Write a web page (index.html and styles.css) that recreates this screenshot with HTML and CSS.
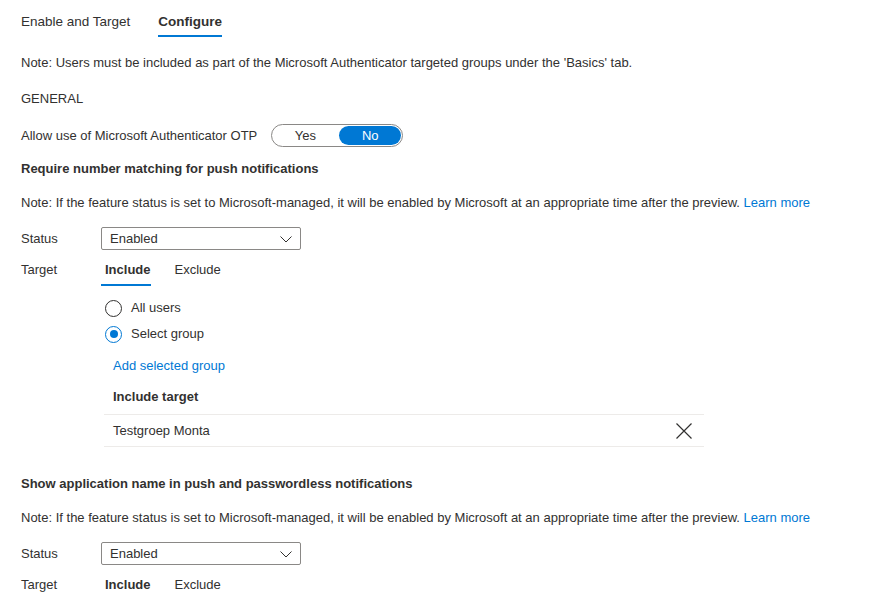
FILE: index.html
```html
<!DOCTYPE html>
<html>
<head>
<meta charset="utf-8">
<link rel="stylesheet" href="styles.css">
</head>
<body>
<div class="page">
  <div class="tabs">
    <div class="tab">Enable and Target</div>
    <div class="tab active">Configure</div>
  </div>
  <p class="note first">Note: Users must be included as part of the Microsoft Authenticator targeted groups under the 'Basics' tab.</p>
  <p class="section-label">GENERAL</p>
  <div class="toggle-row">
    <span>Allow use of Microsoft Authenticator OTP</span>
    <div class="toggle">
      <span class="seg">Yes</span>
      <span class="seg on">No</span>
    </div>
  </div>

  <h3 class="heading">Require number matching for push notifications</h3>
  <p class="note">Note: If the feature status is set to Microsoft-managed, it will be enabled by Microsoft at an appropriate time after the preview. <a class="link">Learn more</a></p>
  <div class="field">
    <span class="label">Status</span>
    <div class="dropdown"><span>Enabled</span>
      <svg width="16" height="16" viewBox="0 0 16 16"><path d="M2.5 5.5 L8 11 L13.5 5.5" fill="none" stroke="#323130" stroke-width="1"/></svg>
    </div>
  </div>
  <div class="field target">
    <span class="label">Target</span>
    <div class="target-body">
      <div class="pivots">
        <span class="pivot active">Include</span>
        <span class="pivot">Exclude</span>
      </div>
      <div class="radios">
        <div class="radio"><span class="circle"></span>All users</div>
        <div class="radio"><span class="circle checked"></span>Select group</div>
      </div>
      <a class="link add">Add selected group</a>
      <div class="table">
        <div class="thead">Include target</div>
        <div class="trow">
          <span>Testgroep Monta</span>
          <svg width="16" height="16" viewBox="0 0 16 16"><path d="M0.5 0.5 L15.5 15.5 M15.5 0.5 L0.5 15.5" stroke="#323130" stroke-width="1.2" fill="none"/></svg>
        </div>
      </div>
    </div>
  </div>

  <h3 class="heading second">Show application name in push and passwordless notifications</h3>
  <p class="note">Note: If the feature status is set to Microsoft-managed, it will be enabled by Microsoft at an appropriate time after the preview. <a class="link">Learn more</a></p>
  <div class="field">
    <span class="label">Status</span>
    <div class="dropdown"><span>Enabled</span>
      <svg width="16" height="16" viewBox="0 0 16 16"><path d="M2.5 5.5 L8 11 L13.5 5.5" fill="none" stroke="#323130" stroke-width="1"/></svg>
    </div>
  </div>
  <div class="field target">
    <span class="label">Target</span>
    <div class="target-body">
      <div class="pivots">
        <span class="pivot active">Include</span>
        <span class="pivot">Exclude</span>
      </div>
    </div>
  </div>
</div>
</body>
</html>
```

FILE: styles.css
```css
* { box-sizing: border-box; }
html, body { margin: 0; padding: 0; background: #fff; }
body {
  font-family: "Segoe UI", "Liberation Sans", Arial, sans-serif;
  font-size: 13px;
  line-height: 20px;
  color: #323130;
}
.page { padding-left: 21px; height: 594px; overflow: hidden; }
p, h3 { margin: 0; }

.tabs { display: flex; gap: 28px; }
.tab { padding-top: 12px; padding-bottom: 3px; border-bottom: 2px solid transparent; font-size: 13.5px; }
.tab.active { border-bottom-color: #0078d4; font-weight: 600; }

.note { margin-top: 14px; }
.note.first { margin-top: 16px; }
.section-label { margin-top: 16px; }

.toggle-row { display: flex; align-items: center; gap: 14px; margin-top: 15px; }
.toggle {
  display: flex; align-items: center; justify-content: space-between;
  width: 132px; height: 23px; border: 1px solid #8a8886; border-radius: 12px; padding: 1px;
}
.seg { width: 64px; height: 19px; line-height: 19px; text-align: center; border-radius: 10px; }
.seg.on { background: #0078d4; color: #fff; width: 62px; }

.heading { font-size: 13px; font-weight: 700; margin-top: 12px; line-height: 20px; }
.heading.second { margin-top: 27px; }

.link { color: #0078d4; text-decoration: none; }

.field { display: flex; align-items: flex-start; margin-top: 14px; }
.label { width: 80px; flex: none; line-height: 23px; }
.dropdown {
  width: 200px; height: 23px; border: 1px solid #8a8886; border-radius: 2px;
  display: flex; align-items: center; justify-content: space-between; padding: 0 6px 0 8px;
}
.field.target { margin-top: 10px; }
.field.target .label { line-height: 20px; }

.pivots { display: flex; }
.pivot { padding: 0 12px 4px 4px; border-bottom: 2px solid transparent; }
.pivot.active { font-weight: 600; border-bottom-color: #0078d4; padding-right: 0; margin-right: 20px; }

.radios { margin-top: 12px; padding-left: 4px; display: flex; flex-direction: column; gap: 6px; }
.radio { display: flex; align-items: center; gap: 9px; height: 20px; }
.circle { width: 17px; height: 17px; border: 1px solid #323130; border-radius: 50%; position: relative; flex: none; }
.circle.checked { border-color: #0078d4; }
.circle.checked::after {
  content: ""; position: absolute; left: 3.5px; top: 3.5px; width: 8px; height: 8px; border-radius: 50%; background: #0078d4;
}

.add { display: block; margin-top: 12px; padding-left: 12px; }
.table { width: 600px; margin-left: 3px; margin-top: 11px; }
.thead { font-weight: 600; padding-left: 9px; padding-bottom: 7px; border-bottom: 1px solid #edebe9; }
.trow {
  display: flex; align-items: center; justify-content: space-between;
  height: 32px; padding-left: 9px; padding-right: 12px; border-bottom: 1px solid #edebe9;
}
```
